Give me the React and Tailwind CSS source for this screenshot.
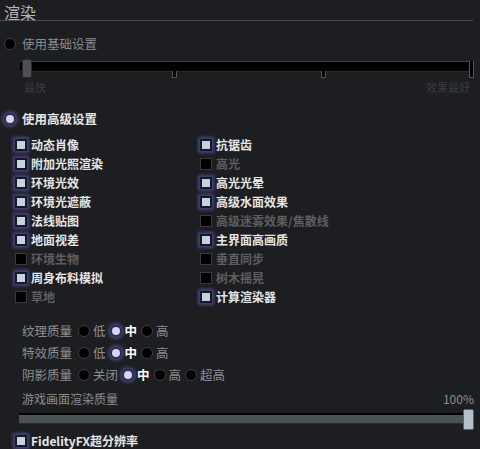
import React from 'react';

const font = { fontFamily: '"Noto Sans CJK SC", "Noto Sans", sans-serif' };

const leftItems = [
  ['动态肖像', true],
  ['附加光照渲染', true],
  ['环境光效', true],
  ['环境光遮蔽', true],
  ['法线贴图', true],
  ['地面视差', true],
  ['环境生物', false],
  ['周身布料模拟', true],
  ['草地', false],
];

const rightItems = [
  ['抗锯齿', true],
  ['高光', false],
  ['高光光晕', true],
  ['高级水面效果', true],
  ['高级迷雾效果/焦散线', false],
  ['主界面高画质', true],
  ['垂直同步', false],
  ['树木摇晃', false],
  ['计算渲染器', true],
];

const qualityRows = [
  ['纹理质量', ['低', '中', '高'], 1],
  ['特效质量', ['低', '中', '高'], 1],
  ['阴影质量', ['关闭', '中', '高', '超高'], 1],
];

const Radio = ({ on }) =>
  on ? (
    <span className="w-[12px] h-[12px] rounded-full bg-[#d6d6f2] border-2 border-[#2b2b55] shadow-[0_0_4px_1px_#5c5aa0] shrink-0" />
  ) : (
    <span className="w-[12px] h-[12px] rounded-full bg-black border border-[#3e3e3e] shrink-0" />
  );

const Check = ({ on }) =>
  on ? (
    <span className="w-[12px] h-[12px] bg-[#c2d5dc] border-2 border-[#17172c] shadow-[0_0_3px_2px_#48447c] shrink-0" />
  ) : (
    <span className="w-[12px] h-[12px] bg-black border border-[#3a3a3a] shrink-0" />
  );

const CheckRow = ({ label, on }) => (
  <div className="flex items-center h-[19px] gap-[4px]">
    <Check on={on} />
    <span className={`text-[12px] font-bold leading-none ${on ? 'text-[#e6e6e6]' : 'text-[#5f5f5f]'}`}>
      {label}
    </span>
  </div>
);

const App = () => {
  return (
    <div className="w-[480px] h-[449px] bg-[#1d1e22] overflow-hidden" style={font}>
      <div className="h-[20px] pl-[4px] pt-[1px]">
        <span className="block text-[16px] leading-[22px] text-[#b8b8b8]">渲染</span>
      </div>
      <div className="h-[1px] w-[473px] bg-[#48494c]" />

      <div className="flex items-center gap-[6px] pl-[4px] mt-[14px] h-[18px]">
        <Radio on={false} />
        <span className="text-[12.5px] text-[#8c8c8c]">使用基础设置</span>
      </div>

      <div className="relative ml-[20px] mt-[6px] w-[454px] h-[20px]">
        <div className="absolute left-0 right-0 top-[2px] h-[11px] bg-black border-t border-[#3c3c3c] border-b border-b-[#2a2a2a]" />
        <div className="absolute left-[152px] top-[12px] w-[5px] h-[7px] bg-black border border-t-0 border-[#555]" />
        <div className="absolute left-[301px] top-[12px] w-[5px] h-[7px] bg-black border border-t-0 border-[#555]" />
        <div className="absolute right-0 top-[2px] w-[5px] h-[17px] bg-black border border-t-0 border-[#555]" />
        <div className="absolute left-[2px] top-0 w-[10px] h-[19px] rounded-[2px] bg-[#505053] border border-[#2a2a2a]" />
      </div>

      <div className="flex justify-between ml-[24px] w-[446px] h-[16px] text-[11px] leading-[16px] text-[#3c3c3e]">
        <span>最快</span>
        <span>效果最好</span>
      </div>

      <div className="flex items-center gap-[6px] pl-[4px] mt-[15px] h-[18px]">
        <Radio on />
        <span className="text-[12.5px] font-bold text-[#e6e6e6]">使用高级设置</span>
      </div>

      <div className="flex mt-[7px]">
        <div className="flex flex-col pl-[15px] w-[200px]">
          {leftItems.map(([l, on]) => (
            <CheckRow key={l} label={l} on={on} />
          ))}
        </div>
        <div className="flex flex-col">
          {rightItems.map(([l, on]) => (
            <CheckRow key={l} label={l} on={on} />
          ))}
        </div>
      </div>

      <div className="flex flex-col mt-[14px] pl-[22px]">
        {qualityRows.map(([label, opts, sel]) => (
          <div key={label} className="flex items-center h-[22px] text-[12.5px]">
            <span className="text-[#8e8e8e] mr-[6px]">{label}</span>
            {opts.map((o, i) => (
              <span key={o} className="flex items-center gap-[3px] mr-[4px]">
                <Radio on={i === sel} />
                <span className={i === sel ? 'text-white font-bold' : 'text-[#8e8e8e]'}>{o}</span>
              </span>
            ))}
          </div>
        ))}
      </div>

      <div className="flex justify-between items-end pl-[22px] w-[474px] mt-[4px] h-[18px] text-[12px] text-[#8e8e8e]">
        <span>游戏画面渲染质量</span>
        <span className="text-[12px]">100%</span>
      </div>

      <div className="relative ml-[19px] mt-[1px] w-[455px] h-[21px]">
        <div className="absolute left-0 right-0 top-[4px] h-[11px] bg-[#4b5254] border-t-2 border-black border-b border-b-[#2a2e30]" />
        <div className="absolute right-0 top-0 w-[11px] h-[21px] rounded-[2px] bg-[#b4c0cc] border border-[#5a6470]" />
      </div>

      <div className="pl-[15px] mt-[1px]">
        <div className="flex items-center h-[19px] gap-[4px]">
          <Check on />
          <span className="text-[12px] font-semibold leading-none text-[#e6e6e6]">FidelityFX超分辨率</span>
        </div>
      </div>
    </div>
  );
};

export default App;
